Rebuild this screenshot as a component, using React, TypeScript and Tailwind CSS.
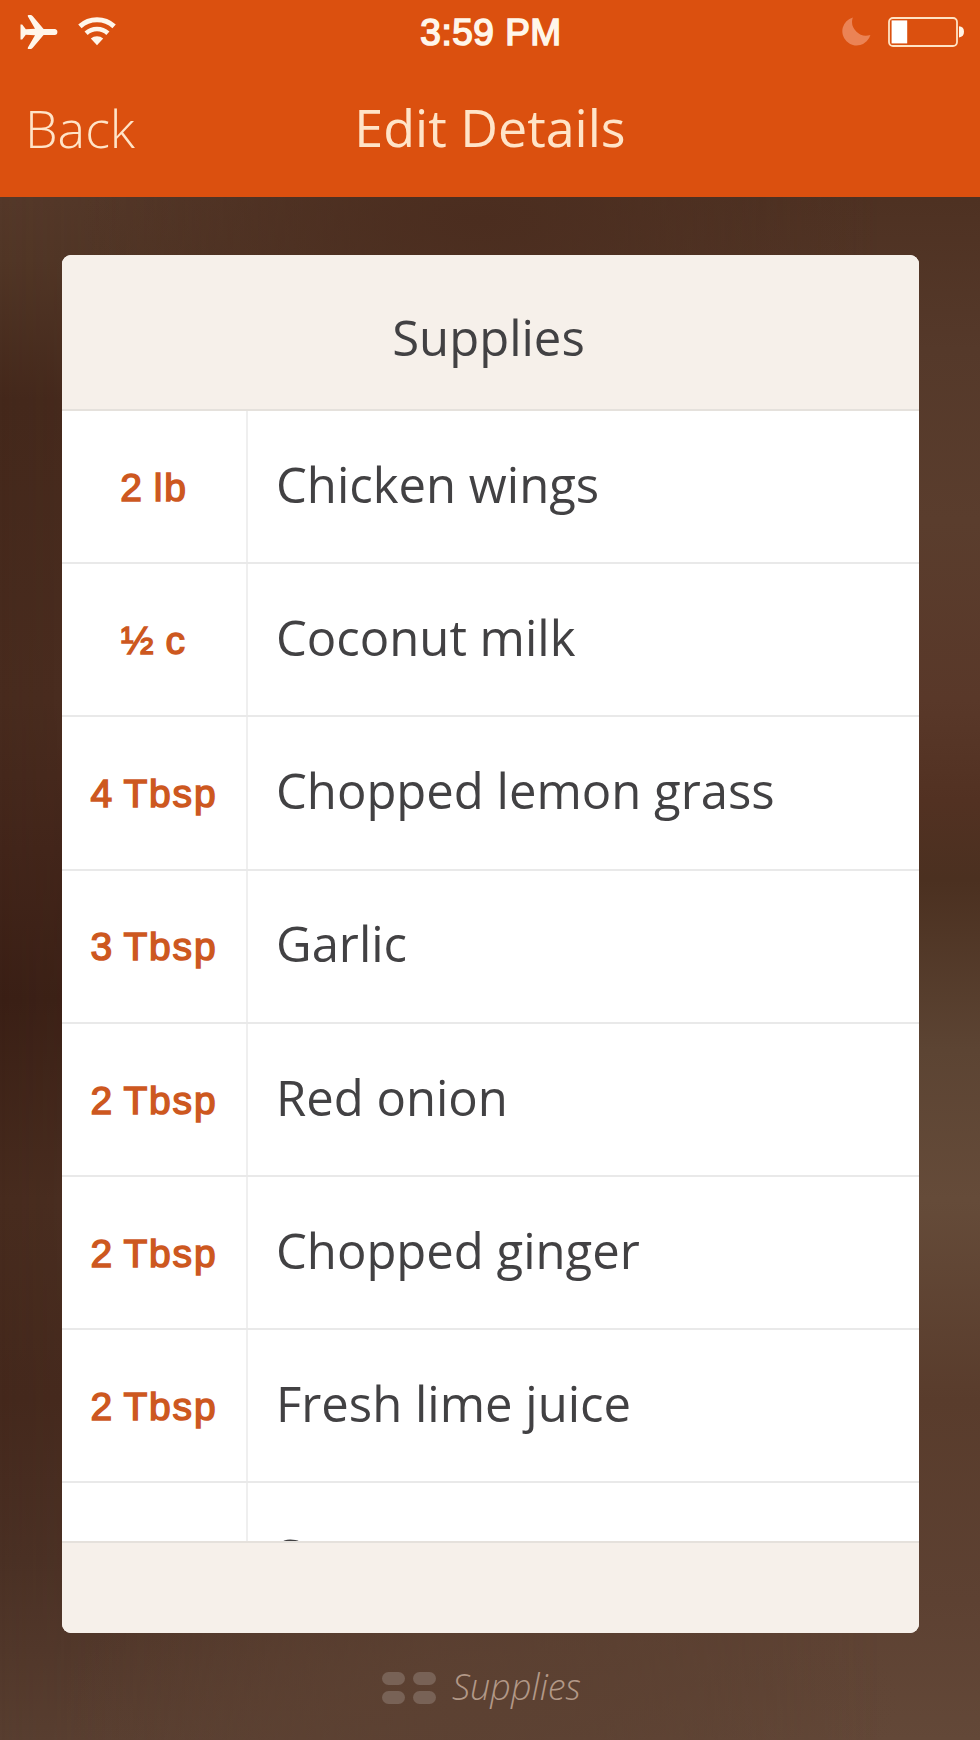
import React from 'react';

interface Supply {
  amount: string;
  name: string;
}

const supplies: Supply[] = [
  { amount: '2 lb', name: 'Chicken wings' },
  { amount: '½ c', name: 'Coconut milk' },
  { amount: '4 Tbsp', name: 'Chopped lemon grass' },
  { amount: '3 Tbsp', name: 'Garlic' },
  { amount: '2 Tbsp', name: 'Red onion' },
  { amount: '2 Tbsp', name: 'Chopped ginger' },
  { amount: '2 Tbsp', name: 'Fresh lime juice' },
  { amount: '', name: 'S' },
];

const PlaneIcon = () => (
  <svg width="38" height="36" viewBox="0 0 38 36" fill="currentColor">
    <path d="M15 14.8 7.9 2.6Q7.2 1 8.5 1H10.4Q11.8 1 12.8 2.2L23.6 14.9H34.6Q37.4 15.2 37.4 18T34.6 21.1H23.6L12.8 33.8Q11.8 35 10.4 35H8.5Q7.2 35 7.9 33.4L15 21.2 5.8 20.8 2.2 25.4H.5V10.6H2.2L5.8 15.2Z" />
  </svg>
);

const WifiIcon = () => (
  <svg width="38" height="29" viewBox="0 0 38 29">
    <g fill="none" stroke="currentColor">
      <path d="M1.9 9.4A25.4 25.4 0 0 1 36.1 9.4" strokeWidth="5" />
      <path d="M8.1 16.2A16.2 16.2 0 0 1 29.9 16.2" strokeWidth="4.6" />
    </g>
    <path d="M12.8 21.6A9.2 9.2 0 0 1 25.2 21.6L19 28.2Z" fill="currentColor" />
  </svg>
);

const MoonIcon = () => (
  <svg width="29" height="29" viewBox="0 0 29 29" fill="#eb8355">
    <path d="M10.8.4A14.3 14.3 0 1 0 28.4 18A14 14 0 0 1 10.8.4Z" />
  </svg>
);

const BatteryIcon = () => (
  <svg width="77" height="30" viewBox="0 0 77 30">
    <rect x="1" y="1" width="68" height="28" rx="4" fill="none" stroke="#ffe3c4" strokeWidth="1.8" />
    <rect x="3.6" y="3.4" width="15.6" height="23" fill="#fff" />
    <path d="M71 9.2Q76 9.6 76 14.8T71 20.4Z" fill="#fff3e6" />
  </svg>
);

const StatusBar: React.FC = () => (
  <div className="grid h-[63px] grid-cols-3 items-center text-[#fff6ea]">
    <div className="flex items-center gap-5 pl-5">
      <PlaneIcon />
      <WifiIcon />
    </div>
    <div className="pt-[2px] pl-[2px] text-center font-['Liberation_Sans',sans-serif] text-[37px] tracking-[0.5px] [-webkit-text-stroke:1.6px_#fff6ea]">
      3:59 PM
    </div>
    <div className="flex items-center justify-end gap-[17px] pr-[15px]">
      <MoonIcon />
      <BatteryIcon />
    </div>
  </div>
);

const App: React.FC = () => {
  return (
    <div className="relative isolate flex h-[1740px] w-[980px] flex-col overflow-hidden bg-[linear-gradient(180deg,#543829_200px,#513626_260px,#44281b_400px,#482b1e_700px,#42251a_850px,#3a1f15_1000px,#472b1e_1200px,#44281c_1400px,#4a3024_1560px,#583e30_1740px)] font-['Open_Sans',sans-serif]">
      {/* Right side of the backdrop fades in over the left one */}
      <div className="absolute inset-0 -z-10 bg-[linear-gradient(180deg,#4e3122_200px,#55392a_350px,#5a3d2d_520px,#593829_700px,#523122_800px,#4b3020_880px,#5c4433_1050px,#654b39_1200px,#593c2c_1400px,#5d4132_1600px,#634838_1740px)] [mask-image:linear-gradient(90deg,transparent_0%,black_90%)]" />
      <div className="absolute inset-0 -z-10 bg-[radial-gradient(ellipse_400px_160px_at_480px_220px,#4b2d1f_0%,#4b2d1f00_100%),radial-gradient(ellipse_420px_160px_at_480px_1700px,#5c4132_0%,#5c413200_100%)]" />

      <header className="h-[197px] shrink-0 bg-[#db500f]">
        <StatusBar />
        <div className="grid h-[130px] grid-cols-3 items-center text-[52px] text-[#ffe4c8]">
          <button className="pl-[25px] text-left font-light">Back</button>
          <h1 className="pb-[2px] text-center whitespace-nowrap">Edit Details</h1>
        </div>
      </header>

      <main className="mx-[62px] mt-[58px] flex h-[1378px] w-[857px] shrink-0 flex-col overflow-hidden rounded-[9px] bg-white text-[#424143]">
        <h2 className="flex h-[156px] shrink-0 items-center justify-center border-b-2 border-[#e5e1dc] bg-[#f6f0ea] pt-[11px] pr-[4px] text-[49px]">
          Supplies
        </h2>
        <ul className="h-[1130px] overflow-hidden">
          {supplies.map((supply, index) => (
            <li key={index} className="flex h-[153.2px] border-b-2 border-[#e9e9e9]">
              <div className="flex w-[186px] items-center justify-center border-r-2 border-[#efefef] pt-[3px] font-['Liberation_Sans',sans-serif] text-[39px] tracking-[1.8px] [word-spacing:-2.5px] text-[#cd581f] [-webkit-text-stroke:1.5px_#cd581f]">
                {supply.amount}
              </div>
              <div className="flex items-center pb-1 pl-7 text-[49px]">{supply.name}</div>
            </li>
          ))}
        </ul>
        <div className="flex-1 border-t-2 border-[#e5e1dc] bg-[#f6f0ea]" />
      </main>

      <footer className="flex flex-1 items-center justify-center gap-4 pr-[17px] text-[#b29887]">
        <div className="grid grid-cols-2 gap-x-2 gap-y-[6px] pt-[2px]">
          <span className="h-[13px] w-[23px] rounded-full bg-[#786256]" />
          <span className="h-[13px] w-[23px] rounded-full bg-[#786256]" />
          <span className="h-[13px] w-[23px] rounded-full bg-[#786256]" />
          <span className="h-[13px] w-[23px] rounded-full bg-[#786256]" />
        </div>
        <span className="text-[36px] font-light italic">Supplies</span>
      </footer>
    </div>
  );
};

export default App;
